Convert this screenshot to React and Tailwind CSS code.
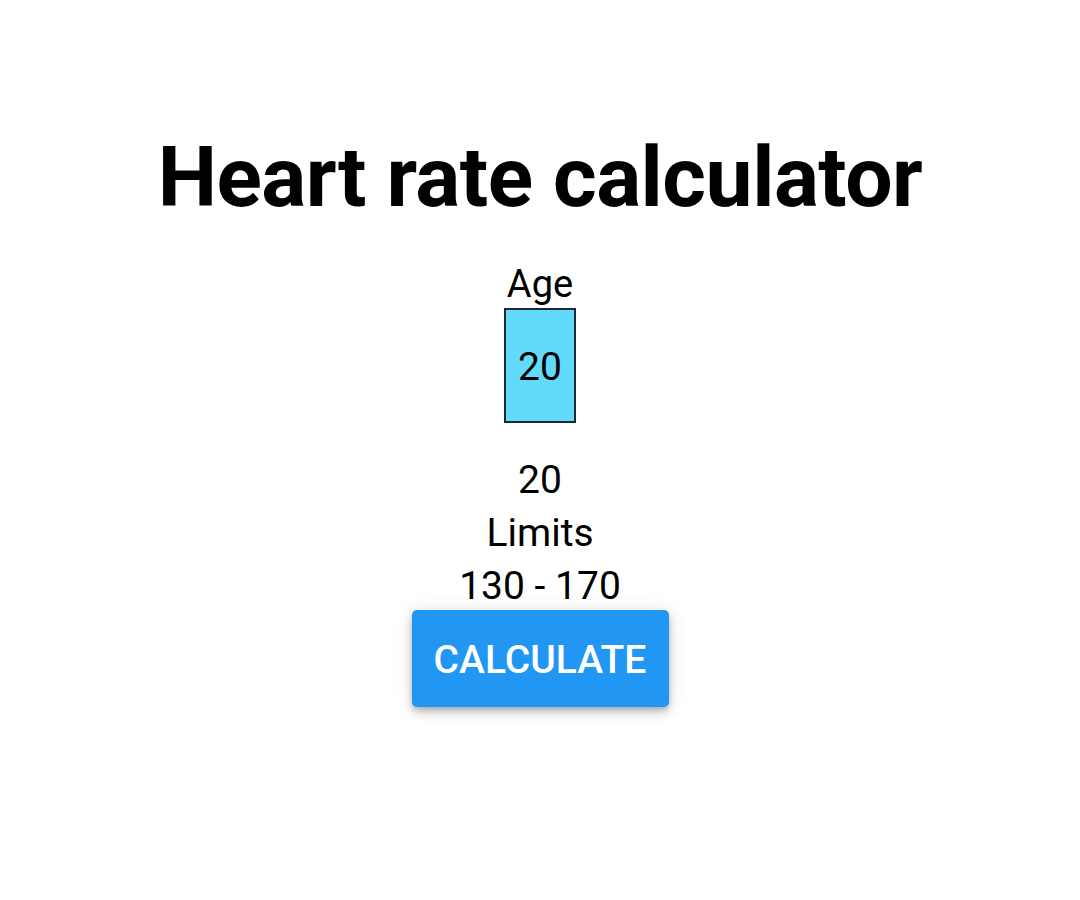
import React, { useState } from 'react';

const App = () => {
    const [age] = useState(20);
    const lower = Math.round((220 - age) * 0.65);
    const upper = Math.round((220 - age) * 0.85);

    return (
        <div className="min-h-[900px] bg-white text-black flex flex-col items-center pt-[129px]" style={{ fontFamily: 'Roboto, "Noto Sans", sans-serif' }}>
            {/* Titulo */}
            <h1 className="text-[84px] font-bold leading-[98px] tracking-[-0.5px]">Heart rate calculator</h1>

            {/* Edad */}
            <div className="mt-[37px] text-[38px] leading-[41px]">Age</div>
            <div className="mt-[3px] w-[72px] h-[115px] bg-[#61dafb] border-2 border-[#1c2833] flex items-center justify-center text-[39px] pt-[4px]">
                {age}
            </div>

            <div className="mt-[31px] flex flex-col items-center text-[39px] leading-[53px]">
                <span>{age}</span>
                <span>Limits</span>
                <span>{lower} - {upper}</span>
            </div>

            <button className="mt-[-3px] w-[257px] h-[97px] pt-[4px] bg-[#2196f3] text-white text-[39px] font-medium uppercase rounded-[5px] shadow-[0_3px_5px_-1px_rgba(0,0,0,0.2),0_6px_10px_0_rgba(0,0,0,0.14),0_1px_18px_0_rgba(0,0,0,0.12)]">
                Calculate
            </button>
        </div>
    );
};

export default App;
